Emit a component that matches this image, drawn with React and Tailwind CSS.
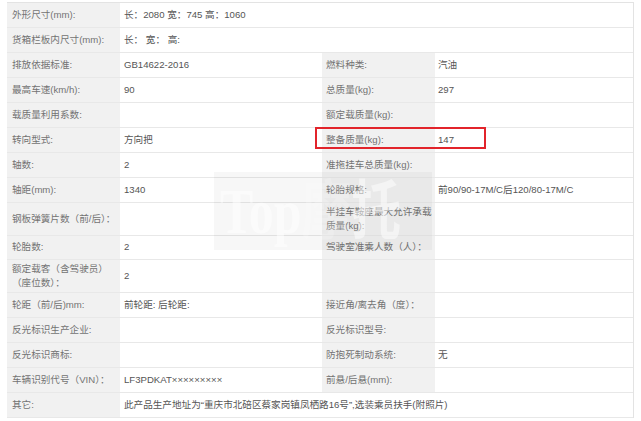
import React from 'react'

// 参数表：full 时左值占满整行
const ROWS = [
  { l: '外形尺寸(mm):', v: '长：2080 宽：745 高：1060', full: true },
  { l: '货箱栏板内尺寸(mm):', v: '长： 宽： 高:', full: true },
  { l: '排放依据标准:', v: 'GB14622-2016', r: '燃料种类:', rv: '汽油' },
  { l: '最高车速(km/h):', v: '90', r: '总质量(kg):', rv: '297' },
  { l: '载质量利用系数:', v: '', r: '额定载质量(kg):', rv: '' },
  { l: '转向型式:', v: '方向把', r: '整备质量(kg):', rv: '147' },
  { l: '轴数:', v: '2', r: '准拖挂车总质量(kg):', rv: '' },
  { l: '轴距(mm):', v: '1340', r: '轮胎规格:', rv: '前90/90-17M/C后120/80-17M/C' },
  { l: '钢板弹簧片数（前/后）：', v: '', r: ['半挂车鞍座最大允许承载', '质量(kg):'], rv: '', tall: true },
  { l: '轮胎数:', v: '2', r: '驾驶室准乘人数（人）：', rv: '', h: 'h-[24px]' },
  { l: ['额定载客（含驾驶员）', '（座位数）：'], v: '2', r: '', rv: '', tall: true },
  { l: '轮距（前/后)mm:', v: '前轮距: 后轮距:', r: '接近角/离去角（度）：', rv: '' },
  { l: '反光标识生产企业:', v: '', r: '反光标识型号:', rv: '' },
  { l: '反光标识商标:', v: '', r: '防抱死制动系统:', rv: '无' },
  { l: '车辆识别代号（VIN）：', v: 'LF3PDKAT×××××××××', r: '前悬/后悬(mm):', rv: '' },
  { l: '其它:', v: '此产品生产地址为“重庆市北碚区蔡家岗镇凤栖路16号”,选装乘员扶手(附照片)', full: true },
]

function Text({ value }) {
  if (Array.isArray(value)) {
    return (
      <div className="leading-[14px] whitespace-nowrap">
        {value[0]}
        <br />
        {value[1]}
      </div>
    )
  }
  return value
}

const label = 'bg-[#f1f1f1] text-[#737373] flex items-center whitespace-nowrap'
const cell = 'text-[#555] flex items-center whitespace-nowrap'

function Row({ row }) {
  const height = row.tall ? 'h-[33px]' : row.h || 'h-[25px]'
  return (
    <div className={`grid grid-cols-[113px_202px_113px_1fr] ${height} border-b border-[#e8e8e8]`}>
      <div className={`${label} pl-[5px]`}>
        <Text value={row.l} />
      </div>
      {row.full ? (
        <div className={`${cell} col-span-3 pl-[4px]`}>{row.v}</div>
      ) : (
        <>
          <div className={`${cell} pl-[4px]`}>{row.v}</div>
          <div className={`${label} pl-[4px]`}>
            <Text value={row.r} />
          </div>
          <div className={`${cell} pl-[3px]`}>{row.rv}</div>
        </>
      )}
    </div>
  )
}

export default function App() {
  return (
    <div
      className="relative w-[641px] h-[421px] bg-white overflow-hidden text-[9.6px]"
      style={{ fontFamily: '"Liberation Sans", "Noto Sans CJK SC", sans-serif' }}
    >
      <div className="ml-[7px] mt-[2px] w-[627px] border-t border-r border-[#e3e3e3]">
        {ROWS.map((row, i) => (
          <Row key={i} row={row} />
        ))}
      </div>

      {/* 红框标注 */}
      <div className="absolute left-[315px] top-[127px] w-[171px] h-[22px] border-2 border-[#e2242b]" />

      {/* 水印 */}
      <div className="absolute left-[214px] top-[172px] w-[218px] h-[78px] bg-black/[0.03] overflow-hidden pointer-events-none">
        <div
          className="absolute left-[6px] top-[8px] text-white/50 font-bold text-[64px] leading-none whitespace-nowrap scale-x-[0.78] origin-left"
          style={{ fontFamily: '"Liberation Serif", "Noto Sans CJK SC", serif' }}
        >
          Top<span className="text-white/20">摩</span>托
        </div>
      </div>
    </div>
  )
}
